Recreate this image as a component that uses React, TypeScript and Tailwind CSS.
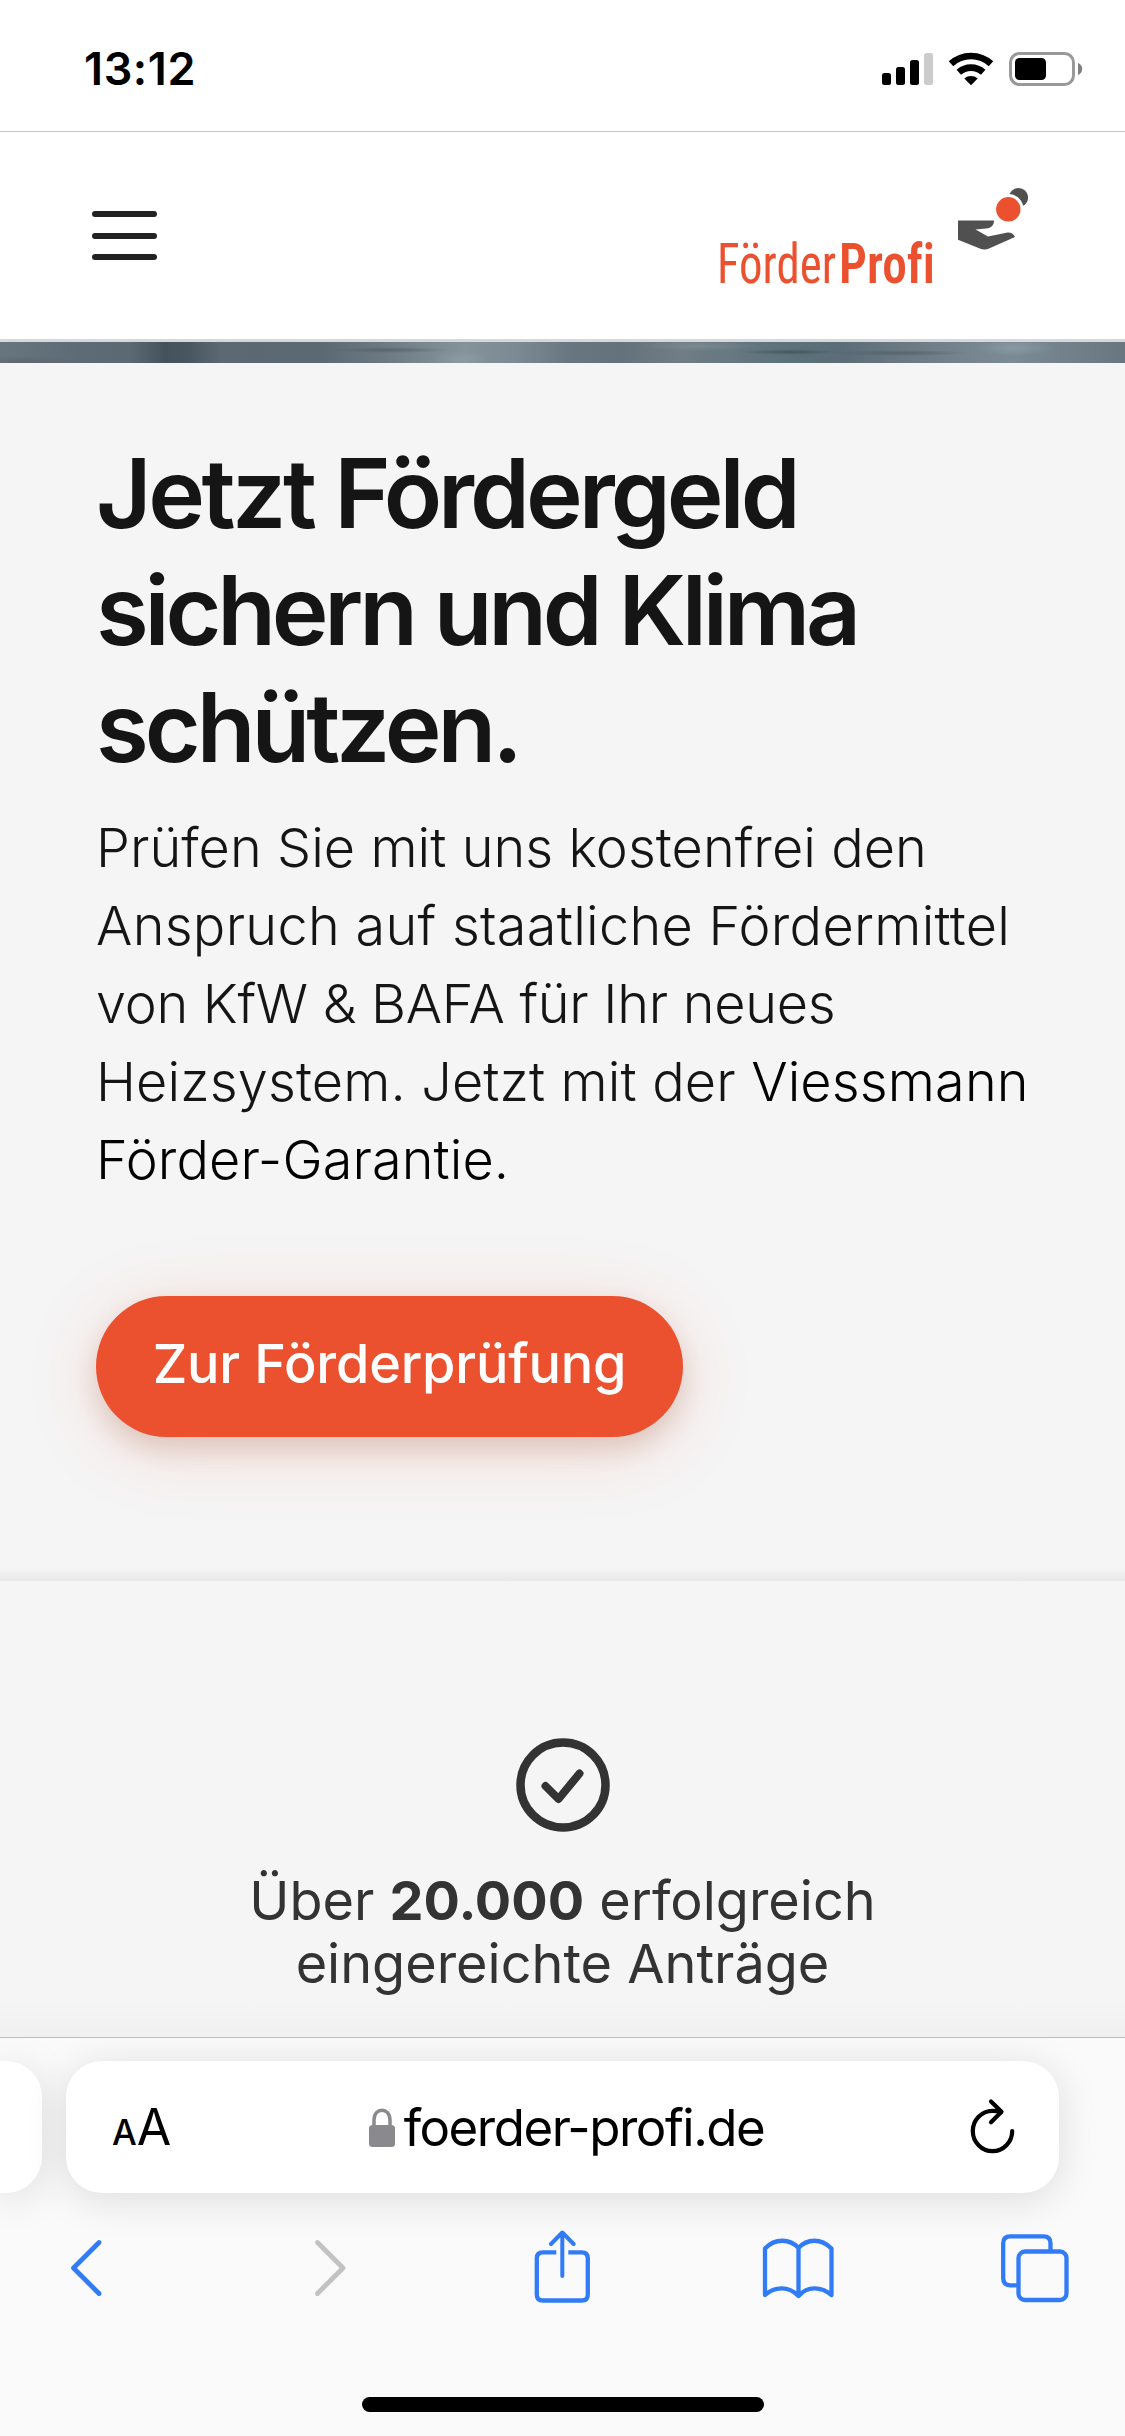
import type { ReactNode } from 'react';

function StatusBar() {
  return (
    <div className="flex h-[132px] items-start justify-between border-b border-[#c6c6c6] bg-white pl-[84px] pr-[42px] pt-[42px]">
      <span className="text-[45px] font-semibold leading-[54px] tracking-[0.6px] text-black">13:12</span>
      <svg width="202" height="36" viewBox="881 51 202 36" className="mt-[9px]">
        <rect x="882" y="73" width="9" height="12" rx="2.5" />
        <rect x="896" y="67" width="9" height="18" rx="2.5" />
        <rect x="910" y="60" width="9" height="25" rx="2.5" />
        <rect x="924" y="53" width="9" height="32" rx="2.5" fill="#ccc" />
        <g fill="none" stroke="#000" strokeWidth="6.6">
          <path d="M951 63.8a29.5 29.5 0 0 1 40 0" />
          <path d="M958.8 72.3a18.2 18.2 0 0 1 24.4 0" />
        </g>
        <path d="M964.3 78.5a10.5 10.5 0 0 1 13.4 0L971 85.2z" />
        <rect x="1010.5" y="53.5" width="63" height="31" rx="9" fill="none" stroke="#999" strokeWidth="3" />
        <rect x="1015" y="58" width="31" height="22" rx="4.5" />
        <path d="M1078 63c2.6 1 4.2 3.2 4.2 6s-1.6 5-4.2 6z" fill="#808080" />
      </svg>
    </div>
  );
}

function Logo() {
  return (
    <div className="flex items-start">
      <div className="flex h-[110px] w-[239px] items-start pt-[59px] font-['Roboto',sans-serif] text-[56px] leading-[56px] [font-stretch:75%] [font-variant-ligatures:none]">
        <svg width="222" height="56" viewBox="0 0 222 56" fill="#ec512f" className="overflow-visible">
          <text x="0" y="39.3" fontWeight="400" textLength="119" lengthAdjust="spacingAndGlyphs">
            Förder
          </text>
          <text x="122" y="39.3" fontWeight="600" textLength="96" lengthAdjust="spacingAndGlyphs">
            Profi
          </text>
        </svg>
      </div>
      <svg width="72" height="110" viewBox="956 185 72 110">
        <path
          d="M958 220.6h36c0 5-2.8 7.6-8 8l-10.5.8 12.5 7.2 18.5-3.9c3.8-.6 7 .8 8.5 4.4l-26 11.400c-3.200 1.300-6.400 1.100-9.200-.1L958 239.8z"
          fill="#505050"
        />
        <circle cx="1018.5" cy="197.5" r="9.6" fill="#505050" />
        <circle cx="1008.3" cy="209.3" r="15.3" fill="#fff" />
        <circle cx="1008.3" cy="209.3" r="12.2" fill="#ec512f" />
      </svg>
    </div>
  );
}

function Header() {
  return (
    <header className="flex h-[210px] items-start justify-between border-b-[3px] border-[#d8d8d8] bg-white pl-[92px] pr-[97px]">
      <button className="mt-[79px] flex flex-col gap-[15.5px]">
        <span className="h-[6px] w-[65px] rounded-full bg-[#222]" />
        <span className="h-[6px] w-[65px] rounded-full bg-[#222]" />
        <span className="h-[6px] w-[65px] rounded-full bg-[#222]" />
      </button>
      <div className="mt-[53px]">
        <Logo />
      </div>
    </header>
  );
}

function PhotoStrip() {
  return (
    <div className="h-[21px] bg-[radial-gradient(ellipse_50px_3px_at_790px_10px,rgba(50,70,80,0.6),transparent),radial-gradient(ellipse_60px_3px_at_390px_8px,rgba(70,85,95,0.6),transparent),radial-gradient(ellipse_70px_3px_at_900px_11px,rgba(70,85,95,0.6),transparent),radial-gradient(ellipse_30px_8px_at_460px_17px,rgba(150,165,172,0.5),transparent),radial-gradient(ellipse_40px_8px_at_1015px_6px,rgba(150,168,178,0.5),transparent),radial-gradient(ellipse_60px_5px_at_700px_4px,rgba(130,145,152,0.6),transparent),radial-gradient(ellipse_60px_6px_at_20px_20px,rgba(90,90,95,0.5),transparent),linear-gradient(to_right,#67767e_0,#5d6b77_80px,#5b6973_130px,#44535b_165px,#495860_190px,#5c6872_220px,#5a6973_320px,#6b7880_380px,#7b8990_430px,#84939a_465px,#7c8b93_515px,#687681_570px,#64727b_620px,#707d84_680px,#647780_740px,#5c717a_790px,#5a6d78_840px,#6a7882_900px,#74838e_960px,#7b8b95_1010px,#73828c_1060px,#67767f_100%)]" />
  );
}

function Hero() {
  return (
    <section className="h-[1218px] bg-[linear-gradient(to_top,#e9e9e9,#f5f5f5_14px)] px-[96px] pt-[72px]">
      <h1 className="whitespace-nowrap text-[96px] font-semibold leading-[117px] tracking-[-4.2px] text-[#151515]">
        <span className="tracking-[-3.4px]">Jetzt </span>
        <span className="tracking-[-4.0px]">Fördergeld</span>
        <br />
        sichern und Klima
        <br />
        <span className="tracking-[-4.0px]">schützen.</span>
      </h1>
      <p className="mt-[23px] whitespace-nowrap text-[54px] font-light leading-[78px] text-[#151515]">
        <span className="tracking-[0.05px]">Prüfen Sie mit uns kostenfrei den</span>
        <br />
        <span className="tracking-[0.29px]">Anspruch auf staatliche Fördermittel</span>
        <br />
        <span className="tracking-[-0.28px]">von KfW &amp; BAFA für Ihr neues</span>
        <br />
        <span className="tracking-[0.14px]">
          Heizsystem. Jetzt mit der <span className="text-black">Viessmann</span>
        </span>
        <br />
        <span className="tracking-[0.1px] text-black">Förder-Garantie.</span>
      </p>
      <button className="mt-[97px] flex h-[141px] w-[587px] justify-center whitespace-nowrap rounded-full bg-[#ec512f] pt-[35px] text-[54px] font-medium leading-[65px] tracking-[-0.2px] text-white shadow-[0_12px_24px_rgba(120,50,20,0.16),0_12px_72px_rgba(236,81,47,0.18)]">
        Zur Förderprüfung
      </button>
    </section>
  );
}

function Proof() {
  return (
    <section className="flex h-[456px] flex-col items-center bg-[linear-gradient(to_top,#f0f0f0,#f5f5f5_34px)] pt-[157px] text-[#333]">
      <svg width="94" height="94" viewBox="0 0 94 94" fill="none" stroke="#333">
        <circle cx="47" cy="47" r="42.5" strokeWidth="8.5" />
        <path d="M29.5 48 42.5 61 63.5 35.5" strokeWidth="8" strokeLinecap="round" strokeLinejoin="round" />
      </svg>
      <p className="mt-[37px] whitespace-nowrap text-center text-[54px] leading-[63px]">
        Über <strong className="font-bold">20.000</strong> erfolgreich
        <br />
        eingereichte Anträge
      </p>
    </section>
  );
}

function AddressBar() {
  return (
    <div className="flex gap-[24px] pt-[23px]">
      <div className="h-[132px] w-[42px] rounded-r-[36px] bg-white shadow-[0_6px_42px_rgba(0,0,0,0.12)]" />
      <div className="flex h-[132px] w-[993px] items-center justify-between rounded-[36px] bg-white pl-[46px] pr-[42px] shadow-[0_6px_42px_rgba(0,0,0,0.12)]">
        <div className="mt-[5px] flex w-[64px] items-baseline text-black">
          <span className="text-[35px] font-medium leading-[60px]">A</span>
          <span className="text-[50px] leading-[60px]">A</span>
        </div>
        <div className="flex items-center gap-[8px]">
          <svg width="28" height="40" viewBox="0 0 28 40" className="mt-[2px]">
            <path d="M6 20V12C6 -1 22 -1 22 12V20" fill="none" stroke="#8a898e" strokeWidth="3.5" />
            <rect x="1" y="17" width="26" height="22" rx="3.5" fill="#8a898e" />
          </svg>
          <span className="mt-[2px] whitespace-nowrap text-[51px] leading-[60px] tracking-[-1.5px] text-black">foerder-profi.de</span>
        </div>
        <svg
          width="50"
          height="60"
          viewBox="968 2096 50 60"
          fill="none"
          stroke="#000"
          strokeWidth="4.2"
          strokeLinecap="round"
          strokeLinejoin="round"
          className="ml-[11px]"
        >
          <path d="M1013.2 2130a19.7 20.2 0 1 1-19.7-20.2q4 0 8.5 1" />
          <path d="M992 2100.5 1002.5 2110.8 992 2121.2" />
        </svg>
      </div>
    </div>
  );
}

function ToolIcon({ children, muted }: { children: ReactNode; muted?: boolean }) {
  return (
    <svg
      width="76"
      height="76"
      viewBox="0 0 76 76"
      fill="none"
      className={muted ? 'text-[#c2c2c2]' : 'text-[#327bf7]'}
      stroke="currentColor"
      strokeWidth="4.3"
      strokeLinecap="round"
      strokeLinejoin="round"
    >
      {children}
    </svg>
  );
}

function Toolbar() {
  return (
    <nav className="mt-[37px] flex justify-between pl-[49px] pr-[52px]">
      <ToolIcon>
        <path d="M50 12.5 24.5 38 50 63.5" strokeWidth="4.8" />
      </ToolIcon>
      <ToolIcon muted>
        <path d="M31.5 12.5 57 38 31.5 63.5" strokeWidth="4.8" />
      </ToolIcon>
      <ToolIcon>
        <path d="M33.3 22.3H19.8q-6 0-6 6V64.5q0 6 6 6H58.8q6 0 6-6V28.3q0-6-6-6H45.3" strokeLinecap="butt" />
        <path d="M39.3 46V3M28 14 39.3 2.5 50.6 14" strokeWidth="4" />
      </ToolIcon>
      <ToolIcon>
        <path d="M38.5 18C30 8.5 15 8 5 18.5V65C15 56 29 56 38.5 66C47 56 61 56 71.5 65V18.5C61 8 47 8.5 38.5 18zV66" />
      </ToolIcon>
      <ToolIcon>
        <rect x="21.5" y="21.5" width="48" height="48.5" rx="6.5" />
        <path d="M21 55.3H13.2q-7 0-7-7V13.3q0-7 7-7H46.5q7 0 7 7V21" strokeLinecap="butt" />
      </ToolIcon>
    </nav>
  );
}

export default function App() {
  return (
    <div className="flex h-[2436px] w-[1125px] flex-col overflow-hidden bg-[#f5f5f5] font-['Inter',sans-serif]">
      <StatusBar />
      <Header />
      <PhotoStrip />
      <Hero />
      <Proof />
      <footer className="flex h-[399px] flex-col overflow-hidden border-t border-[#bdbdbd] bg-[#fafafa]">
        <AddressBar />
        <Toolbar />
        <div className="mx-auto mt-[91px] h-[15px] w-[402px] rounded-full bg-black" />
      </footer>
    </div>
  );
}
